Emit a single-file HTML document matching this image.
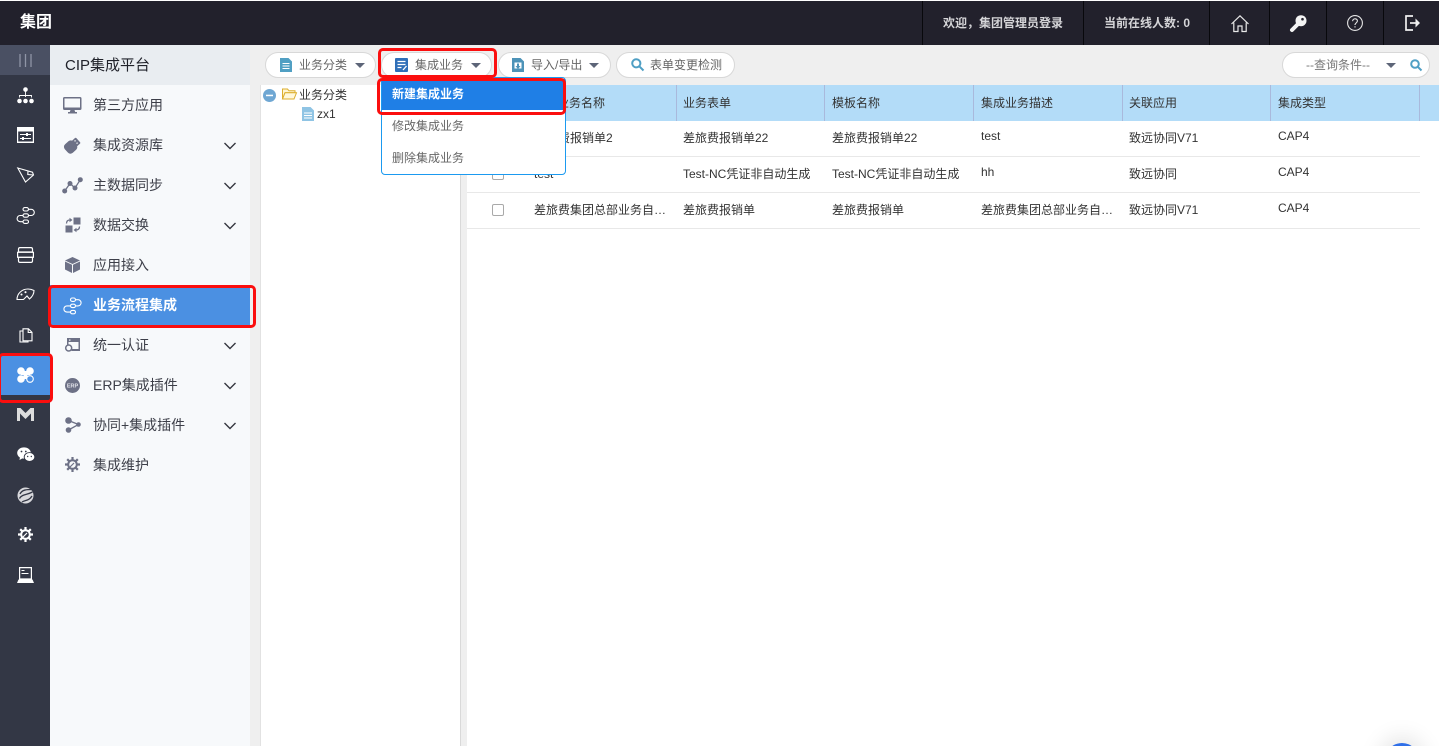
<!DOCTYPE html>
<html lang="zh"><head><meta charset="utf-8"><title>CIP集成平台</title>
<style>
*{box-sizing:border-box}
html,body{margin:0;padding:0;width:1439px;height:746px;overflow:hidden;background:#fff;font-family:"Liberation Sans","Noto Sans CJK SC",sans-serif;color:#333}
#p{position:absolute;left:0;top:0;width:1439px;height:746px;overflow:hidden}
.a{position:absolute}
.t{position:absolute;white-space:nowrap;line-height:16px}
svg{position:absolute;overflow:visible}
.hd{left:0;top:1px;width:1439px;height:44px;background:#22212c}
.sep{position:absolute;top:1px;width:1px;height:44px;background:#08080c}
.ht{color:#d5d5d8;font-size:12px;font-weight:bold}
.rail{left:0;top:45px;width:50px;height:701px;background:#333745}
.side{left:50px;top:45px;width:200px;height:701px;background:#f7f9fb}
.m{position:absolute;left:93px;font-size:14px;color:#3d3f49;line-height:20px;white-space:nowrap}
.btn{position:absolute;top:52px;height:26px;background:#fff;border:1px solid #d8d8d8;border-radius:13px}
.bt{position:absolute;top:57px;font-size:12px;color:#666;line-height:16px;white-space:nowrap}
.tri{position:absolute;width:0;height:0;border-left:5px solid transparent;border-right:5px solid transparent;border-top:5px solid #5d6578}
.th{position:absolute;top:95px;font-size:12px;color:#333;line-height:16px;white-space:nowrap}
.td{position:absolute;font-size:12px;color:#333;line-height:16px;white-space:nowrap}
.cb{position:absolute;left:492px;width:12px;height:12px;border:1px solid #a9a9a9;border-radius:2px;background:#fff}
.rb{position:absolute;border:3px solid #fb0e0e;border-radius:5px}
.chev{left:223px;width:14px;height:8px}
</style></head><body><div id="p">
<div class="a hd"></div>
<div class="t" style="left:20px;top:15px;font-size:16px;font-weight:bold;color:#fff">集团</div>
<div class="sep" style="left:922px"></div><div class="sep" style="left:1083px"></div><div class="sep" style="left:1209px"></div><div class="sep" style="left:1269px"></div><div class="sep" style="left:1326px"></div><div class="sep" style="left:1383px"></div>
<div class="t ht" style="left:943px;top:15px">欢迎，集团管理员登录</div>
<div class="t ht" style="left:1104px;top:15px">当前在线人数: 0</div>
<svg style="left:1231px;top:15px" width="18" height="17" fill="none" stroke="#e8e8e8" stroke-width="1.200"><path d="M.5 9 9 .8 17.500 9"/><path d="M2.800 7.500V16.500H7V11h4v5.500h4.200V7.500"/></svg>
<svg style="left:1290px;top:15px" width="17" height="17"><circle cx="11" cy="5.700" r="5.500" fill="#f4f4f4"/><circle cx="12.500" cy="4.200" r="1.300" fill="#22212c"/><path d="M8 9 2 15" stroke="#f4f4f4" stroke-width="4" stroke-linecap="round"/></svg>
<svg style="left:1347px;top:15px" width="16" height="16" fill="none" stroke="#e6e6e6" stroke-width="1.100"><circle cx="8" cy="8" r="7.400"/><path d="M5.600 6.200C5.700 3 10.400 3 10.400 6c0 1.800-2.400 2-2.400 4"/><path d="M8 11.200v1.300"/></svg>
<svg style="left:1405px;top:15px" width="16" height="16" fill="none" stroke="#f0f0f0" stroke-width="1.700"><path d="M8 1H1v14h7"/><path d="M5 8h7"/><path d="M10.500 3.500 15 8l-4.500 4.500z" fill="#f0f0f0" stroke="none"/></svg>

<div class="a rail"></div>
<div class="a" style="left:0;top:45px;width:50px;height:30px;background:#4a5063"></div>
<svg style="left:19px;top:54px" width="13" height="13" stroke="#8f95a6" stroke-width="1.300"><path d="M1 0v13M6.500 0v13M12 0v13"/></svg>
<div class="a" style="left:0;top:355px;width:50px;height:40px;background:#4b90e2"></div>

<!-- rail icons -->
<svg style="left:17px;top:87px" width="17" height="17" fill="#fff"><circle cx="8.500" cy="2.500" r="2.300"/><circle cx="2.500" cy="14" r="2.300"/><circle cx="8.500" cy="14" r="2.300"/><circle cx="14.500" cy="14" r="2.300"/><path d="M8.500 4v6M2.500 10.500V8.500h12v2" fill="none" stroke="#fff" stroke-width=".9"/></svg>
<svg style="left:17px;top:127px" width="17" height="16"><rect width="17" height="16" fill="#fff"/><rect x="1.200" y="4.500" width="14.600" height="10" fill="#333745"/><path d="M3 7.500h11M3 11.500h11" stroke="#fff" stroke-width="1"/><rect x="9" y="6" width="2" height="3" fill="#fff"/><rect x="5" y="10" width="2" height="3" fill="#fff"/></svg>
<svg style="left:17px;top:167px" width="18" height="16" fill="none" stroke="#fff" stroke-width="1.100"><path d="M.8 1 15.500 5.200 16.500 8 8.500 15z"/><path d="M11 3.800 10.800 7.500 16.500 8"/></svg>
<svg style="left:16px;top:207px" width="19" height="17" fill="none" stroke="#fff" stroke-width="1.100"><rect x="7" y=".6" width="5.500" height="3.400" rx="1.700"/><rect x="7" y="6.800" width="5.500" height="3.400" rx="1.700"/><rect x="7" y="13" width="5.500" height="3.400" rx="1.700"/><path d="M12.500 2.300h2.700a3.100 3.100 0 0 1 0 6.200h-2.700M7 8.500H4.200a3.100 3.100 0 0 0 0 6.200H7"/></svg>
<svg style="left:17px;top:247px" width="17" height="16" fill="none" stroke="#fff" stroke-width="1.200"><path d="M3 .6h11A1.500 1.500 0 0 1 15.500 2v3H1.500V2A1.500 1.500 0 0 1 3 .6z"/><path d="M.6 5.300h15.800v5H.6z"/><path d="M1.500 10.300h14V14a1.500 1.500 0 0 1-1.500 1.400H3A1.500 1.500 0 0 1 1.500 14z"/></svg>
<svg style="left:16px;top:288px" width="19" height="12" fill="none" stroke="#fff" stroke-width="1.100"><path d="M1 11.500C1 5.500 6 1 12 1c2 0 4 .5 6 1.500 0 3-1.500 6-4.500 8.500L11 8 7.500 11.500z"/><circle cx="5.500" cy="6.500" r=".5"/><circle cx="9.500" cy="4.200" r=".5"/></svg>
<svg style="left:19px;top:328px" width="14" height="15" fill="none" stroke="#fff" stroke-width="1.100"><path d="M4 .8h5.500L13 4.300v8.500H4z"/><path d="M4 3H1v11h8v-1.200"/><path d="M9.200 1v3.500H13"/></svg>
<svg style="left:17px;top:367px" width="17" height="16" fill="#fff"><circle cx="4" cy="4" r="3.800"/><circle cx="13" cy="4" r="3.800"/><circle cx="4" cy="12" r="3.800"/><rect x="4" y="4" width="9" height="4"/><rect x="6.500" y="4" width="4" height="8"/><circle cx="13" cy="12" r="3.300" fill="#4b90e2" stroke="#fff" stroke-width="1.100"/></svg>
<svg style="left:17px;top:408px" width="17" height="13" fill="#ddd"><path d="M0 0h3.500L8.500 5l5-5H17v13h-3V5.500l-5.500 5.500L3 5.500V13H0z"/></svg>
<svg style="left:17px;top:447px" width="18" height="15"><ellipse cx="7" cy="6" rx="6.800" ry="5.600" fill="#fff"/><path d="M3 10l-.5 3 3.500-2z" fill="#fff"/><ellipse cx="12.500" cy="10" rx="5.300" ry="4.400" fill="#fff" stroke="#333745" stroke-width=".9"/><circle cx="4.500" cy="4.500" r=".9" fill="#333745"/><circle cx="8.800" cy="4.500" r=".9" fill="#333745"/><circle cx="10.700" cy="9.500" r=".7" fill="#333745"/><circle cx="14.300" cy="9.500" r=".7" fill="#333745"/></svg>
<svg style="left:17px;top:487px" width="17" height="17"><circle cx="8.500" cy="8.500" r="8" fill="#d8d8dc"/><path d="M3 7C5 2.500 10 2.500 15 2.500M2.500 11.500C5 7 10 8 15.500 5M5 15C8 13 12 14 15 9" stroke="#333745" stroke-width="1.300" fill="none"/></svg>
<svg style="left:18px;top:527px" width="15" height="15" fill="none" stroke="#fff"><circle cx="7.500" cy="7.500" r="4.300" stroke-width="2"/><path d="M7.500 0v3M7.500 12v3M0 7.500h3M12 7.500h3M2.200 2.200l2 2M10.800 10.800l2 2M12.800 2.200l-2 2M4.200 10.800l-2 2" stroke-width="2.200"/><path d="M5 10l4-4" stroke-width="1.200"/></svg>
<svg style="left:17px;top:567px" width="17" height="16"><path d="M2.600.6h11.800v11.400H2.600z" fill="#333745" stroke="#fff" stroke-width="1.200"/><path d="M4.500 3.500h3M4.500 6.500h7" stroke="#fff"/><path d="M1.500 12.500h14l1.500 3.500H0z" fill="#fff"/></svg>

<div class="a side"></div>
<div class="a" style="left:50px;top:45px;width:200px;height:40px;background:#e9edf1"></div>
<div class="t" style="left:65px;top:55px;font-size:15px;line-height:20px;color:#20222a;padding-top:1px">CIP集成平台</div>
<div class="a" style="left:50px;top:285px;width:200px;height:40px;background:#4b90e2"></div>

<div class="m" style="top:95px">第三方应用</div>
<div class="m" style="top:135px">集成资源库</div>
<div class="m" style="top:175px">主数据同步</div>
<div class="m" style="top:215px">数据交换</div>
<div class="m" style="top:255px">应用接入</div>
<div class="m" style="top:295px;color:#fff;font-weight:bold">业务流程集成</div>
<div class="m" style="top:335px">统一认证</div>
<div class="m" style="top:375px">ERP集成插件</div>
<div class="m" style="top:415px">协同+集成插件</div>
<div class="m" style="top:455px">集成维护</div>

<svg class="chev" style="top:142px" viewBox="0 0 14 8" fill="none" stroke="#34363f" stroke-width="1.400"><path d="M1.500 1 7 6.500 12.500 1"/></svg>
<svg class="chev" style="top:182px" viewBox="0 0 14 8" fill="none" stroke="#34363f" stroke-width="1.400"><path d="M1.500 1 7 6.500 12.500 1"/></svg>
<svg class="chev" style="top:222px" viewBox="0 0 14 8" fill="none" stroke="#34363f" stroke-width="1.400"><path d="M1.500 1 7 6.500 12.500 1"/></svg>
<svg class="chev" style="top:342px" viewBox="0 0 14 8" fill="none" stroke="#34363f" stroke-width="1.400"><path d="M1.500 1 7 6.500 12.500 1"/></svg>
<svg class="chev" style="top:382px" viewBox="0 0 14 8" fill="none" stroke="#34363f" stroke-width="1.400"><path d="M1.500 1 7 6.500 12.500 1"/></svg>
<svg class="chev" style="top:422px" viewBox="0 0 14 8" fill="none" stroke="#34363f" stroke-width="1.400"><path d="M1.500 1 7 6.500 12.500 1"/></svg>

<!-- side icons -->
<svg style="left:63px;top:97px" width="19" height="17" fill="#6d7186"><path d="M1.500 0h15.500A1.500 1.500 0 0 1 18.500 1.500v10a1.500 1.500 0 0 1-1.500 1.500H1.500A1.500 1.500 0 0 1 0 11.500v-10A1.500 1.500 0 0 1 1.500 0zM1.500 1.500v9h15.500v-9z" fill-rule="evenodd"/><path d="M7.500 13h4l.7 2h1.800v1.500H5V15h1.800z"/></svg>
<svg style="left:64px;top:137px" width="17" height="16" fill="#6d7186"><g transform="rotate(-42 8.500 8)"><rect x="0" y="2.500" width="11.500" height="11.500" rx="3.500"/><rect x="10.500" y="4.500" width="5.500" height="7.500" rx="1"/><rect x="12.500" y="6" width="1.300" height="1.300" fill="#f7f9fb"/><rect x="12.500" y="9" width="1.300" height="1.300" fill="#f7f9fb"/></g></svg>
<svg style="left:62px;top:177px" width="21" height="17" fill="#6d7186"><circle cx="2.700" cy="14" r="2.500"/><circle cx="8" cy="6.500" r="2.500"/><circle cx="13" cy="11" r="2.500"/><circle cx="18.300" cy="2.700" r="2.500"/><path d="M2.700 14 8 6.500l5 4.500 5.300-8.300" fill="none" stroke="#6d7186" stroke-width="1.300"/></svg>
<svg style="left:65px;top:217px" width="16" height="16" fill="#6d7186"><rect x="8.500" y=".5" width="7" height="7"/><rect x=".5" y="8.500" width="7" height="7"/><path d="M1.500 6.500C1.500 4 3 3 5 3" fill="none" stroke="#6d7186" stroke-width="1.300"/><path d="M4.500 .8 7.500 3 4.500 5.200z"/><path d="M14.500 9.500C14.500 12 13 13 11 13" fill="none" stroke="#6d7186" stroke-width="1.300"/><path d="M11.500 10.800 8.500 13l3 2.200z"/></svg>
<svg style="left:65px;top:257px" width="15" height="16" fill="#6d7186"><path d="M7.500 0 15 3.500 7.500 7 0 3.500z"/><path d="M0 4.500l7 3.300V16L0 12.500zM15 4.500 8 7.800V16l7-3.500z"/></svg>
<svg style="left:63px;top:297px" width="19" height="18" fill="none" stroke="#fff" stroke-width="1.100"><rect x="7.500" y="1" width="5" height="3.400" rx="1.700"/><rect x="7.500" y="7.200" width="5" height="3.400" rx="1.700"/><rect x="7.500" y="13.400" width="5" height="3.400" rx="1.700"/><path d="M12.500 2.700H15a3.100 3.100 0 0 1 0 6.200h-2.500M7.500 8.900H4a3.100 3.100 0 0 0 0 6.200h3.500"/></svg>
<svg style="left:65px;top:338px" width="15" height="14" fill="#6d7186"><path d="M2 0h13v13H6.500v-2h7V4H3.500v2.500H2z"/><rect x="4" y="1.500" width="1.500" height="1.200" fill="#f7f9fb"/><circle cx="3.700" cy="10" r="3" fill="#f7f9fb" stroke="#6d7186" stroke-width="1.500"/></svg>
<svg style="left:65px;top:378px" width="15" height="15"><circle cx="7.500" cy="7.500" r="7.500" fill="#6d7186"/><text x="7.500" y="9.700" font-size="5.500" font-weight="bold" text-anchor="middle" fill="#e3e4ea" font-family="Liberation Sans">ERP</text></svg>
<svg style="left:65px;top:417px" width="16" height="16" fill="#6d7186"><circle cx="3.500" cy="3.500" r="3.300"/><circle cx="3.500" cy="13" r="2.800"/><circle cx="13.500" cy="7.500" r="2.300"/><path d="M3.500 3.500l10 4-10 5.500" fill="none" stroke="#6d7186" stroke-width="1.300"/></svg>
<svg style="left:65px;top:457px" width="15" height="15" fill="none" stroke="#6d7186"><circle cx="7.500" cy="7.500" r="4.300" stroke-width="2"/><path d="M7.500 0v3M7.500 12v3M0 7.500h3M12 7.500h3M2.200 2.200l2 2M10.800 10.800l2 2M12.800 2.200l-2 2M4.200 10.800l-2 2" stroke-width="2.200"/><path d="M5 10l4-4" stroke-width="1.200"/></svg>

<!-- content frame -->
<div class="a" style="left:250px;top:45px;width:1189px;height:701px;background:#efefef"></div>
<div class="a" style="left:260px;top:85px;width:201px;height:661px;background:#fff;border-left:1px solid #e2e2e2;border-right:1px solid #d9d9d9"></div>
<div class="a" style="left:467px;top:85px;width:972px;height:661px;background:#fff"></div>
<div class="a" style="left:467px;top:85px;width:972px;height:36px;background:#b3dcf8"></div>

<!-- toolbar -->
<div class="btn" style="left:265px;width:111px"></div>
<svg style="left:280px;top:58px" width="12" height="14"><path d="M0 0h8.500L12 3.500V14H0z" fill="#509fc3"/><path d="M2.500 5.500h7M2.500 8h7M2.500 10.500h7" stroke="#fff" stroke-width="1"/></svg>
<div class="bt" style="left:299px">业务分类</div><div class="tri" style="left:355px;top:63px"></div>
<div class="btn" style="left:381px;width:111px"></div>
<svg style="left:395px;top:58px" width="13" height="14"><rect width="13" height="14" rx="1" fill="#2f6fb8"/><path d="M2.500 3.500h8M2.500 6.500h8M2.500 9.500h4" stroke="#fff" stroke-width="1.200"/><path d="M8 12l3.500-4" stroke="#fff" stroke-width="1.300"/></svg>
<div class="bt" style="left:415px">集成业务</div><div class="tri" style="left:471px;top:63px"></div>
<div class="btn" style="left:498px;width:113px"></div>
<svg style="left:512px;top:58px" width="12" height="14"><path d="M0 0h8.500L12 3.500V14H0z" fill="#4d93b8"/><path d="M2.500 4.500h7v6h-7z" fill="#fff"/><path d="M6 11 3.500 8h1.500V5.500h2V8h1.500z" fill="#4d93b8"/></svg>
<div class="bt" style="left:531px">导入/导出</div><div class="tri" style="left:589px;top:63px"></div>
<div class="btn" style="left:616px;width:119px"></div>
<svg style="left:631px;top:58px" width="13" height="13" fill="none" stroke="#4f9fc4" stroke-width="2"><circle cx="5.300" cy="5.300" r="4.100"/><path d="M8.300 8.300 12.500 12.500"/></svg>
<div class="bt" style="left:650px">表单变更检测</div>
<div class="btn" style="left:1282px;width:148px"></div>
<div class="bt" style="left:1306px;color:#777">--查询条件--</div><div class="tri" style="left:1386px;top:63px"></div>
<svg style="left:1410px;top:59px" width="12" height="12" fill="none" stroke="#4f9fc4" stroke-width="2"><circle cx="5" cy="5" r="3.800"/><path d="M7.800 7.800 11.500 11.500"/></svg>

<!-- tree -->
<svg style="left:263px;top:89px" width="13" height="13"><circle cx="6.500" cy="6.500" r="6.500" fill="#6fa7d3"/><rect x="3" y="5.700" width="7" height="1.500" fill="#fff"/></svg>
<svg style="left:282px;top:88px" width="15" height="12"><path d="M.5 1h5l1.500 1.800h6v2H3L.5 11z" fill="#fff5d0" stroke="#dcae2e"/><path d="M3 4.800h11.500L12 11H.5z" fill="#fff8dc" stroke="#dcae2e"/></svg>
<div class="t" style="left:299px;top:87px;font-size:12px;color:#333">业务分类</div>
<svg style="left:302px;top:107px" width="12" height="14"><path d="M0 0h8.500L12 3.500V14H0z" fill="#8fc4e4"/><path d="M2 6h8M2 8.500h8M2 11h8" stroke="#fff"/></svg>
<div class="t" style="left:317px;top:106px;font-size:12px;color:#333">zx1</div>

<!-- table header -->
<div class="a" style="left:676px;top:85px;width:1px;height:36px;background:#a9b9dc"></div>
<div class="a" style="left:824px;top:85px;width:1px;height:36px;background:#a9b9dc"></div>
<div class="a" style="left:973px;top:85px;width:1px;height:36px;background:#a9b9dc"></div>
<div class="a" style="left:1122px;top:85px;width:1px;height:36px;background:#a9b9dc"></div>
<div class="a" style="left:1270px;top:85px;width:1px;height:36px;background:#a9b9dc"></div>
<div class="a" style="left:1419px;top:85px;width:1px;height:36px;background:#a9b9dc"></div>
<div class="th" style="left:557px">业务名称</div>
<div class="th" style="left:683px">业务表单</div>
<div class="th" style="left:832px">模板名称</div>
<div class="th" style="left:981px">集成业务描述</div>
<div class="th" style="left:1129px">关联应用</div>
<div class="th" style="left:1278px">集成类型</div>

<!-- rows -->
<div class="a" style="left:467px;top:156px;width:953px;height:1px;background:#e8e8e8"></div>
<div class="a" style="left:467px;top:192px;width:953px;height:1px;background:#e8e8e8"></div>
<div class="a" style="left:467px;top:228px;width:953px;height:1px;background:#e8e8e8"></div>

<div class="td" style="left:534px;top:130px">差旅费报销单2</div>
<div class="td" style="left:683px;top:130px">差旅费报销单22</div>
<div class="td" style="left:832px;top:130px">差旅费报销单22</div>
<div class="td" style="left:981px;top:128px">test</div>
<div class="td" style="left:1129px;top:130px">致远协同V71</div>
<div class="td" style="left:1278px;top:128px">CAP4</div>

<div class="cb" style="top:168px"></div>
<div class="td" style="left:534px;top:166px">test</div>
<div class="td" style="left:683px;top:166px">Test-NC凭证非自动生成</div>
<div class="td" style="left:832px;top:166px">Test-NC凭证非自动生成</div>
<div class="td" style="left:981px;top:164px">hh</div>
<div class="td" style="left:1129px;top:166px">致远协同</div>
<div class="td" style="left:1278px;top:164px">CAP4</div>

<div class="cb" style="top:204px"></div>
<div class="td" style="left:534px;top:202px">差旅费集团总部业务自…</div>
<div class="td" style="left:683px;top:202px">差旅费报销单</div>
<div class="td" style="left:832px;top:202px">差旅费报销单</div>
<div class="td" style="left:981px;top:202px">差旅费集团总部业务自…</div>
<div class="td" style="left:1129px;top:202px">致远协同V71</div>
<div class="td" style="left:1278px;top:200px">CAP4</div>

<!-- dropdown -->
<div class="a" style="left:381px;top:77px;width:185px;height:98px;background:#fff;border:1px solid #1b9af0;border-radius:4px"></div>
<div class="a" style="left:382px;top:79px;width:183px;height:31px;background:#1f7fe6"></div>
<div class="t" style="left:392px;top:86px;font-size:12px;font-weight:bold;color:#fff">新建集成业务</div>
<div class="t" style="left:392px;top:118px;font-size:12px;color:#666">修改集成业务</div>
<div class="t" style="left:392px;top:150px;font-size:12px;color:#666">删除集成业务</div>

<!-- red outlines -->
<div class="rb" style="left:378px;top:48px;width:119px;height:30px"></div>
<div class="rb" style="left:377px;top:78px;width:189px;height:37px"></div>
<div class="rb" style="left:48px;top:285px;width:208px;height:43px"></div>
<div class="rb" style="left:-2px;top:353px;width:55px;height:50px"></div>

<div class="a" style="left:1385px;top:743px;width:34px;height:34px;background:#2f6fe8;border-radius:50%;box-shadow:0 0 22px 6px rgba(0,0,0,.1)"></div>
</div></body></html>
